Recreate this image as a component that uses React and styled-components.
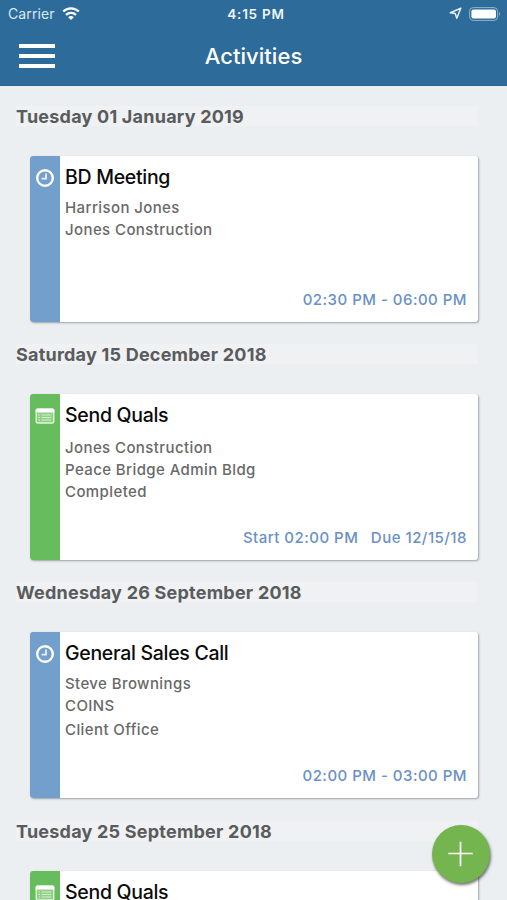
import styled, { createGlobalStyle } from 'styled-components'

const GlobalStyle = createGlobalStyle`
  * {
    box-sizing: border-box;
  }

  body {
    margin: 0;
    background: #ebeff2;
    font-family: 'Inter', 'Liberation Sans', sans-serif;
  }
`

const Screen = styled.div`
  position: relative;
  display: flex;
  flex-direction: column;
  height: 100vh;
  min-height: 900px;
  overflow: hidden;
  background: #ebeff2;
`

const Header = styled.header`
  flex: none;
  height: 86px;
  color: #fff;
  background: #2d6c9a;
  border-bottom: 1px solid #2a6592;
`

const StatusBar = styled.div`
  display: grid;
  grid-template-columns: 1fr auto 1fr;
  align-items: center;
  height: 27px;
  padding: 0 6px 0 8px;
`

const StatusGroup = styled.div`
  display: flex;
  align-items: center;
  justify-content: ${props => props.$end ? 'flex-end' : 'flex-start'};
  gap: 7px;
`

const Carrier = styled.span`
  font-size: 14px;
  letter-spacing: 0.1px;
  color: #dbe8f1;
`

const Clock = styled.span`
  margin-left: 3px;
  font-size: 13.5px;
  font-weight: 600;
  letter-spacing: 0.75px;
  color: #eef5fa;
`

const NavBar = styled.div`
  display: grid;
  grid-template-columns: 1fr auto 1fr;
  align-items: center;
  height: 57px;
  padding: 0 19px;
`

const MenuButton = styled.button`
  display: flex;
  flex-direction: column;
  justify-content: space-between;
  width: 36px;
  height: 24px;
  padding: 0;
  border: 0;
  background: none;
`

const MenuLine = styled.span`
  height: 4px;
  background: #fff;
`

const PageTitle = styled.h1`
  margin: 0;
  font-size: 22px;
  font-weight: 500;
  line-height: 28px;
  letter-spacing: 0.05px;
`

const List = styled.main`
  flex: 1;
  min-height: 0;
  padding: 20px 29px 0 16px;
  overflow: hidden;
`

const Day = styled.section`
  height: 238.2px;
`

const DayTitle = styled.h2`
  height: 20px;
  margin: 0 0 30px;
  font-size: 18px;
  font-weight: 700;
  line-height: 21px;
  letter-spacing: 0.22px;
  color: #595b5d;
  background: #eff1f3;
`

const Card = styled.article`
  display: flex;
  height: 166px;
  margin-left: 14px;
  overflow: hidden;
  border-radius: 3px;
  background: #fff;
  box-shadow: 1px 1px 2px rgba(60, 70, 80, 0.45);
`

const CardStripe = styled.div`
  display: flex;
  flex: none;
  justify-content: center;
  width: 30px;
  padding-top: 12px;
  background: ${props => props.$task ? '#67bd5d' : '#739fcd'};
`

const CardBody = styled.div`
  display: flex;
  flex: 1;
  flex-direction: column;
  padding: 9px 11px 11.5px 5px;
`

const CardTitle = styled.h3`
  margin: 0 0 ${props => props.$task ? '10px' : '8px'};
  font-size: 19.5px;
  font-weight: 500;
  line-height: 24px;
  letter-spacing: -0.3px;
  color: #0b0b0b;
`

const Detail = styled.p`
  margin: ${props => props.$place ? '2px' : 0} 0 0;
  font-size: 15px;
  font-weight: 500;
  line-height: 21.7px;
  letter-spacing: 0.4px;
  color: #696969;
`

const Times = styled.div`
  display: flex;
  justify-content: flex-end;
  gap: 12.5px;
  margin-top: auto;
  font-size: 15px;
  font-weight: 500;
  line-height: 22px;
  letter-spacing: 0.48px;
  color: #6a90c8;
`

const AddButton = styled.button`
  position: absolute;
  right: 17px;
  bottom: 17px;
  display: flex;
  align-items: center;
  justify-content: center;
  width: 58px;
  height: 58px;
  padding: 0;
  border: 0;
  border-radius: 50%;
  background: #74b54f;
  box-shadow: 1px 2px 3px rgba(50, 60, 50, 0.7);
`

const days = [
  {
    date: 'Tuesday 01 January 2019',
    type: 'meeting',
    title: 'BD Meeting',
    details: ['Harrison Jones', 'Jones Construction'],
    times: ['02:30 PM - 06:00 PM'],
  },
  {
    date: 'Saturday 15 December 2018',
    type: 'task',
    title: 'Send Quals',
    details: ['Jones Construction', 'Peace Bridge Admin Bldg', 'Completed'],
    times: ['Start 02:00 PM', 'Due 12/15/18'],
  },
  {
    date: 'Wednesday 26 September 2018',
    type: 'meeting',
    title: 'General Sales Call',
    details: ['Steve Brownings', 'COINS'],
    place: 'Client Office',
    times: ['02:00 PM - 03:00 PM'],
  },
  {
    date: 'Tuesday 25 September 2018',
    type: 'task',
    title: 'Send Quals',
    details: [],
    times: [],
  },
]

function WifiIcon() {
  return <svg width="18" height="14" viewBox="0 0 18 14" fill="none" stroke="#fff" strokeWidth="2.2">
    <path d="M1.2 4.6C5.5 0.2 12.5 0.2 16.8 4.6" />
    <path d="M4 7.9C6.8 5.1 11.2 5.1 14 7.9" />
    <path d="M9 13L6.2 10.2C7.8 8.7 10.2 8.7 11.8 10.2Z" fill="#fff" stroke="none" />
  </svg>
}

function LocationIcon() {
  return <svg width="13" height="13" viewBox="0 0 13 13" fill="none" stroke="#e6f0f7" strokeWidth="1.5" strokeLinejoin="round">
    <path d="M11.8 1.3L1.3 5.7L6.2 6.5L7.8 11.2Z" />
  </svg>
}

function BatteryIcon() {
  return <svg width="32" height="14" viewBox="0 0 32 14">
    <rect x="0.6" y="0.6" width="28" height="12.8" rx="3.6" fill="none" stroke="#8fb3cd" strokeWidth="1" />
    <rect x="2.4" y="2.4" width="24.6" height="9.2" rx="2" fill="#fff" />
    <path d="M30 4.8Q32 7 30 9.2Z" fill="#8fb3cd" />
  </svg>
}

function ClockIcon() {
  return <svg width="20" height="20" viewBox="0 0 20 20" fill="none" stroke="#fff">
    <circle cx="10" cy="10" r="7.8" strokeWidth="2.4" />
    <path d="M11 5.6V10.6H6.6" strokeWidth="1.8" stroke="#e8f0f8" />
  </svg>
}

function TaskIcon() {
  return <svg width="20" height="20" viewBox="0 0 20 20">
    <rect x="1.2" y="3.2" width="17.6" height="13.8" rx="1.6" fill="#8fd085" stroke="#e4f5e1" strokeWidth="1.3" />
    <path d="M0.6 6.4V4.4Q0.6 2.6 2.4 2.6H17.6Q19.4 2.6 19.4 4.4V6.4Z" fill="#fff" />
    <path d="M3.4 9H5M3.4 11.5H5M3.4 14H5M6.5 9H16.2M6.5 11.5H16.2M6.5 14H16.2" stroke="#d4f0cf" strokeWidth="1.2" />
  </svg>
}

function Activity({ day }) {
  const task = day.type === 'task'

  return <Card>
    <CardStripe $task={task}>{task ? <TaskIcon /> : <ClockIcon />}</CardStripe>
    <CardBody>
      <CardTitle $task={task}>{day.title}</CardTitle>
      {day.details.map(detail => <Detail key={detail}>{detail}</Detail>)}
      {day.place && <Detail $place>{day.place}</Detail>}
      <Times>
        {day.times.map(time => <span key={time}>{time}</span>)}
      </Times>
    </CardBody>
  </Card>
}

function App() {
  return <Screen>
    <GlobalStyle />
    <Header>
      <StatusBar>
        <StatusGroup>
          <Carrier>Carrier</Carrier>
          <WifiIcon />
        </StatusGroup>
        <Clock>4:15 PM</Clock>
        <StatusGroup $end>
          <LocationIcon />
          <BatteryIcon />
        </StatusGroup>
      </StatusBar>
      <NavBar>
        <MenuButton aria-label="Menu">
          <MenuLine />
          <MenuLine />
          <MenuLine />
        </MenuButton>
        <PageTitle>Activities</PageTitle>
      </NavBar>
    </Header>
    <List>
      {days.map(day => <Day key={day.date}>
        <DayTitle>{day.date}</DayTitle>
        <Activity day={day} />
      </Day>)}
    </List>
    <AddButton aria-label="Add activity">
      <svg width="26" height="26" viewBox="0 0 26 26" stroke="#fff" strokeWidth="1.7">
        <path d="M12.5 0.8V25.2M0.3 12.5H24.7" />
      </svg>
    </AddButton>
  </Screen>
}

export default App
